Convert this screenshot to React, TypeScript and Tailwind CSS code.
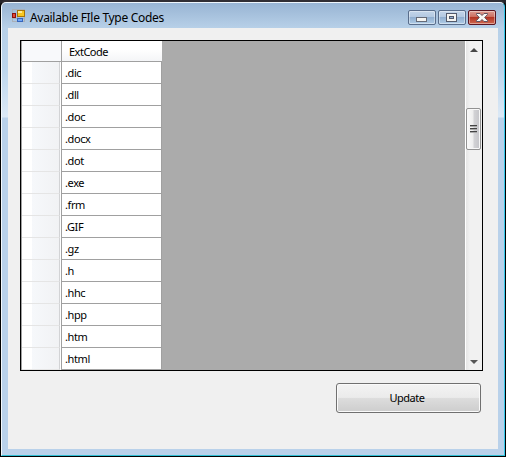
const codes = ['.dic', '.dll', '.doc', '.docx', '.dot', '.exe', '.frm', '.GIF', '.gz', '.h', '.hhc', '.hpp', '.htm', '.html'];

function AppIcon() {
  return (
    <svg width="14" height="14" viewBox="0 0 14 14" shapeRendering="crispEdges" className="shrink-0">
      <path d="M.5 .5h12v12H.5zM5.5 .5v12M.5 9.5h12" fill="none" stroke="#a9b0b8" strokeWidth="1" />
      <rect x="5" y="1" width="8" height="7" fill="#a87508" />
      <rect x="6" y="2" width="6" height="5" fill="#f8c822" />
      <rect x="6" y="2" width="4" height="2" fill="#ffea98" />
      <rect x="0" y="4" width="4" height="5" fill="#8c1010" />
      <rect x="1" y="5" width="2" height="3" fill="#e34b35" />
      <rect x="5" y="9" width="6" height="4" fill="#3566bd" />
      <rect x="6" y="10" width="4" height="2" fill="#72a6f5" />
    </svg>
  );
}

function CaptionButtons() {
  const base = 'flex h-[15px] w-7 items-center justify-center rounded-[2px] border shadow-[inset_0_0_0_1px_rgba(255,255,255,0.4)]';
  const blue = 'border-[#596d8b] bg-[linear-gradient(#c3d5e9_0%,#b2c8e1_48%,#91afd0_50%,#b0cce7_100%)]';
  return (
    <div className="mt-[3px] flex gap-[2px]">
      <button aria-label="Minimize" className={`${base} ${blue}`}>
        <svg width="12" height="11" viewBox="0 0 12 11" shapeRendering="crispEdges">
          <rect x=".5" y="5.5" width="10" height="4" fill="#f4f4f1" stroke="#656b78" />
        </svg>
      </button>
      <button aria-label="Maximize" className={`${base} ${blue}`}>
        <svg width="12" height="11" viewBox="0 0 12 11" shapeRendering="crispEdges">
          <path d="M.5 1.5h10v8H.5zM3.5 4.5h4v2h-4z" fill="#f4f4f1" stroke="#535a6b" fillRule="evenodd" />
        </svg>
      </button>
      <button aria-label="Close" className={`${base} border-[#5b1420] bg-[linear-gradient(#dc9c91_0%,#cc6c5d_47%,#b33524_50%,#ce674f_100%)]`}>
        <svg width="12" height="11" viewBox="0 0 12 11">
          <path d="M.5 1.5h3.5l2 2 2-2h3.5v1L8.7 5.5l2.8 3v1H8l-2-2-2 2H.5v-1l2.8-3-2.8-3z" fill="#f8f8f5" stroke="#5f5360" strokeWidth="1" />
        </svg>
      </button>
    </div>
  );
}

export default function App() {
  return (
    <div className="h-[457px] w-[506px] overflow-hidden bg-[#25242a] font-['Noto_Sans','Open_Sans',sans-serif] text-black">
      <div className="flex h-full flex-col rounded-t-[6px] border border-t-2 border-black border-t-[#302d33] bg-[#25242a]">
        <div className="flex min-h-0 flex-1 flex-col rounded-t-[5px] border border-b-[#30bfd4] border-l-[#f3f8fc] border-r-[#35c8ea] border-t-[#eef5fb] bg-[linear-gradient(#98b4d3_0px,#b7d0e8_25px,#bcd5ec_65px,#dce9f6_114px,#b9d1ea_115px,#b9d1ea_100%)] px-[6px] pb-[6px]">
          <header className="flex h-[25px] shrink-0 items-center justify-between pr-[2px]">
            <div className="flex items-center pl-1">
              <AppIcon />
              <h1 className="ml-1 mt-[5px] whitespace-nowrap text-[12px] leading-4 tracking-[-0.31px]">Available FIle Type Codes</h1>
            </div>
            <CaptionButtons />
          </header>
          <main className="flex min-h-0 flex-1 flex-col bg-[#f0f0f0] pl-3 pt-3">
            <div className="flex h-[331px] w-[463px] border border-black bg-[#ababab]">
              <div className="w-[141px] border-l border-[#a0a0a0]">
                <div className="flex h-[21px] border-b border-[#a0a0a0] bg-[#f8f9fb]">
                  <div className="w-10 border-r border-[#a0a0a0]" />
                  <div className="flex-1 bg-[linear-gradient(#ffffff_0%,#ffffff_40%,#f4f5f7_100%)] pl-[7px] text-[11px] leading-[21px] tracking-[-0.5px]">ExtCode</div>
                </div>
                {codes.map((code) => (
                  <div key={code} className="flex h-[22px]">
                    <div className="flex w-[38px] border-b border-r border-b-[#e5e5e5] border-r-[#d2d3d5] bg-white pl-[10px]">
                      <div className="flex-1 bg-[linear-gradient(90deg,#f6f8fb,#f1f2f4)]" />
                    </div>
                    <div className="w-px bg-white" />
                    <div className="flex-1 border-x border-b border-[#a0a0a0] bg-white pl-[3px] text-[11px] leading-[21px] tracking-[-0.4px]">{code}</div>
                  </div>
                ))}
              </div>
              <div className="flex-1" />
              <div className="flex w-[17px] flex-col items-start border-l border-white bg-[linear-gradient(90deg,#e6e6e6,#f1f1f1_4px,#f1f1f1)]">
                <div className="flex h-[67px] flex-col pl-1 pt-[7px]">
                  <svg width="8" height="4" viewBox="0 0 8 4"><path d="M0 4L4 0l4 4z" fill="#474747" /></svg>
                </div>
                <div className="flex h-[42px] w-[15px] flex-col items-center justify-center gap-px rounded-[2px] border border-[#929292] bg-[linear-gradient(90deg,#fafafa_0%,#eeeeee_45%,#d2d2d5_55%,#c4c4c8_100%)] shadow-[inset_0_0_0_1px_#f8f8f8]">
                  {[0, 1, 2].map((n) => <div key={n} className="h-[2px] w-[7px] border-b border-[#aaa] bg-[#444]" />)}
                </div>
                <div className="flex flex-1 items-end pb-[6px] pl-1">
                  <svg width="8" height="4" viewBox="0 0 8 4"><path d="M0 0h8L4 4z" fill="#575757" /></svg>
                </div>
              </div>
            </div>
            <button className="ml-[316px] mt-3 h-[30px] w-[145px] rounded-[3px] border border-[#707070] bg-[linear-gradient(#f3f3f3_0%,#ebebeb_48%,#dddddd_50%,#cdcdcd_100%)] pr-[3px] text-[11px] leading-[26px] tracking-[-0.45px] shadow-[inset_0_0_0_1px_#fafafa]">Update</button>
          </main>
        </div>
      </div>
    </div>
  );
}
